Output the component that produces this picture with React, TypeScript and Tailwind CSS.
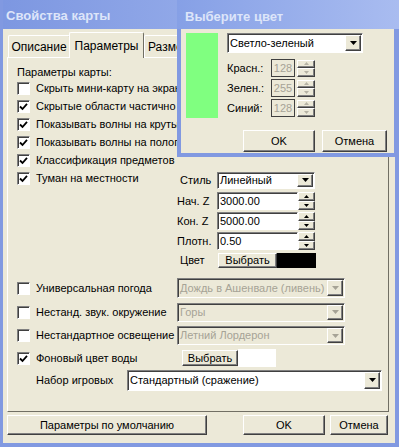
import clsx from "clsx"

const raised = "border border-t-white border-l-white border-r-[#404040] border-b-[#404040] shadow-[inset_-1px_-1px_0_#808080]"
const sunken = "border border-t-[#808080] border-l-[#808080] border-r-white border-b-white shadow-[inset_1px_1px_0_#404040]"

function DownArrow({ disabled }: { disabled?: boolean }) {
    return (
        <svg width="7" height="4" viewBox="0 0 7 4">
            <path d="M0 0h7L3.5 4z" fill={disabled ? "#A6A396" : "#000"} />
        </svg>
    )
}

function Combo({ value, className, disabled }: { value: string; className: string; disabled?: boolean }) {
    return (
        <div className={clsx("flex items-stretch", sunken, disabled ? "bg-[#ECE9D8] text-[#A6A396]" : "bg-white", className)}>
            <span className="flex-1 flex items-center pl-[2px] whitespace-nowrap overflow-hidden">{value}</span>
            <span className={clsx("w-[16px] m-[1px] flex items-center justify-center bg-[#ECE9D8]", raised)}>
                <DownArrow disabled={disabled} />
            </span>
        </div>
    )
}

function Spin({ className, disabled }: { className: string; disabled?: boolean }) {
    const fill = disabled ? "#B5B2A4" : "#000"
    return (
        <div className={clsx("flex flex-col", className)}>
            <span className={clsx("flex-1 flex items-center justify-center bg-[#ECE9D8]", raised)}>
                <svg width="5" height="3" viewBox="0 0 5 3"><path d="M2.5 0L5 3H0z" fill={fill} /></svg>
            </span>
            <span className={clsx("flex-1 flex items-center justify-center bg-[#ECE9D8]", raised)}>
                <svg width="5" height="3" viewBox="0 0 5 3"><path d="M0 0h5L2.5 3z" fill={fill} /></svg>
            </span>
        </div>
    )
}

function Check({ checked, label, className }: { checked?: boolean; label: string; className?: string }) {
    return (
        <div className={clsx("flex items-center gap-[6px] whitespace-nowrap", className)}>
            <span className={clsx("w-[13px] h-[13px] shrink-0 bg-white flex items-center justify-center", sunken)}>
                {checked && (
                    <svg width="9" height="9" viewBox="0 0 9 9">
                        <path d="M1 4.5L3.5 7L8 1.8" fill="none" stroke="#000" strokeWidth="1.8" />
                    </svg>
                )}
            </span>
            <span>{label}</span>
        </div>
    )
}

function Btn({ label, className }: { label: string; className: string }) {
    return (
        <div className={clsx("flex items-center justify-center bg-[#ECE9D8]", raised, className)}>{label}</div>
    )
}

export default function App() {
    const fogRows = [
        { label: "Нач. Z", value: "3000.00" },
        { label: "Кон. Z", value: "5000.00" },
        { label: "Плотн.", value: "0.50" },
    ]

    return (
        <div className="relative w-[399px] h-[447px] overflow-hidden text-[11px] text-black font-['Liberation_Sans',Arial,sans-serif]">
            {/* Main window */}
            <div className="flex flex-col w-full h-full bg-[#8199E1] pl-[3px] pr-[4px] pb-[4px]">
                <div className="h-[29px] shrink-0 flex items-center pt-[3px] pl-[3px] bg-gradient-to-r from-[#7D97E1] to-[#A9BCF0] text-[13px] font-bold text-[#DDE5F9]">
                    Свойства карты
                </div>
                <div className="flex-1 flex flex-col bg-[#ECE9D8] pl-[4px] pt-[3px]">
                    {/* Tabs */}
                    <div className="h-[25px] flex items-end pl-[1px]">
                        <div className="w-[62px] h-[22px] flex items-center justify-center border border-b-0 border-t-white border-l-white border-r-[#716F64] rounded-t-[2px] text-[12px]">
                            Описание
                        </div>
                        <div className="relative z-10 w-[75px] h-[26px] -ml-[1px] -mb-[1px] flex items-center justify-center bg-[#ECE9D8] border border-b-0 border-t-white border-l-white border-r-[#716F64] rounded-t-[2px] text-[12px]">
                            Параметры
                        </div>
                        <div className="w-[36px] h-[22px] flex items-center pl-[3px] border border-r-0 border-b-0 border-t-white border-l-white rounded-tl-[2px] text-[12px] overflow-hidden whitespace-nowrap">
                            Размеры
                        </div>
                    </div>

                    {/* Panel */}
                    <div className="w-[382px] h-[355px] flex flex-col pl-[9px] pt-[7px] border border-t-white border-l-white border-r-[#716F64] border-b-[#716F64]">
                        <div className="h-[14px] flex items-center">Параметры карты:</div>
                        {/* rows running under the colour dialog are cut where it starts */}
                        <Check className="h-[18px] w-[160px] overflow-hidden" label="Скрыть мини-карту на экране предпросмотра" />
                        <Check className="h-[18px] w-[160px] overflow-hidden" checked label="Скрытые области частично видимы" />
                        <Check className="h-[18px] w-[160px] overflow-hidden" checked label="Показывать волны на крутых берегах" />
                        <Check className="h-[18px] w-[160px] overflow-hidden" checked label="Показывать волны на пологих берегах" />
                        <Check className="h-[18px]" checked label="Классификация предметов" />

                        {/* Fog */}
                        <div className="flex">
                            <div className="w-[160px] shrink-0">
                                <Check className="h-[18px]" checked label="Туман на местности" />
                            </div>
                            <div className="flex flex-col">
                                <div className="h-[22px] flex items-center">
                                    <span className="w-[40px] pl-[3px]">Стиль</span>
                                    <Combo className="w-[98px] h-[17px]" value="Линейный" />
                                </div>
                                {fogRows.map(r => (
                                    <div key={r.label} className="h-[20px] flex items-center">
                                        <span className="w-[40px]">{r.label}</span>
                                        <div className={clsx("w-[81px] h-[18px] bg-white flex items-center pl-[2px]", sunken)}>{r.value}</div>
                                        <Spin className="w-[17px] h-[18px]" />
                                    </div>
                                ))}
                                <div className="h-[19px] flex items-center">
                                    <span className="w-[41px] pl-[3px]">Цвет</span>
                                    <Btn className="w-[59px] h-[15px]" label="Выбрать" />
                                    <div className="w-[39px] h-[15px] bg-black" />
                                </div>
                            </div>
                        </div>

                        <div className="h-[6px]" />
                        <div className="h-[24px] flex items-center">
                            <Check className="w-[160px]" label="Универсальная погода" />
                            <Combo disabled className="w-[168px] h-[20px]" value="Дождь в Ашенвале (ливень)" />
                        </div>
                        <div className="h-[24px] flex items-center">
                            <Check className="w-[160px]" label="Нестанд. звук. окружение" />
                            <Combo disabled className="w-[168px] h-[19px]" value="Горы" />
                        </div>
                        <div className="h-[23px] flex items-center">
                            <Check className="w-[160px]" label="Нестандартное освещение" />
                            <Combo disabled className="w-[168px] h-[19px]" value="Летний Лордерон" />
                        </div>
                        <div className="h-[22px] flex items-center">
                            <Check className="w-[165px]" checked label="Фоновый цвет воды" />
                            <Btn className="w-[56px] h-[16px]" label="Выбрать" />
                            <div className="w-[38px] h-[18px] bg-white" />
                        </div>
                        <div className="h-[22px] flex items-center">
                            <span className="w-[110px] pl-[19px]">Набор игровых</span>
                            <Combo className="w-[255px] h-[21px]" value="Стандартный (сражение)" />
                        </div>
                    </div>

                    {/* Bottom buttons */}
                    <div className="mt-[3px] h-[20px] flex">
                        <Btn className="w-[200px]" label="Параметры по умолчанию" />
                        <Btn className="w-[82px] ml-[36px]" label="OK" />
                        <Btn className="w-[58px] ml-[5px]" label="Отмена" />
                    </div>
                </div>
            </div>

            {/* Colour picker dialog on top */}
            <div className="absolute left-[177px] top-0 w-[222px] h-[157px] flex flex-col bg-[#8199E1] pl-[4px] pr-[5px] pb-[4px]">
                <div className="h-[29px] shrink-0 flex items-center pt-[5px] -ml-[4px] -mr-[5px] pl-[8px] bg-gradient-to-r from-[#86A0E6] to-[#A9BCF0] text-[13px] font-bold text-[#DDE5F9]">
                    Выберите цвет
                </div>
                <div className="flex-1 flex flex-col bg-[#ECE9D8] pt-[4px] pl-[5px]">
                    <div className="flex">
                        <div className="w-[32px] h-[85px] bg-[#80FF80]" />
                        <div className="ml-[9px] flex flex-col">
                            <Combo className="w-[136px] h-[20px]" value="Светло-зеленый" />
                            <div className="mt-[6px] flex flex-col gap-[2px]">
                                {[["Красн.:", "128"], ["Зелен.:", "255"], ["Синий:", "128"]].map(([l, v]) => (
                                    <div key={l} className="h-[18px] flex items-center">
                                        <span className="w-[44px]">{l}</span>
                                        <div className="w-[24px] h-[18px] flex items-center justify-center text-[#A6A396] border border-[#404040]">{v}</div>
                                        <Spin disabled className="ml-[2px] w-[18px] h-[17px]" />
                                    </div>
                                ))}
                            </div>
                        </div>
                    </div>
                    <div className="mt-[12px] h-[22px] flex pl-[57px]">
                        <Btn className="w-[72px]" label="OK" />
                        <Btn className="w-[65px] ml-[7px]" label="Отмена" />
                    </div>
                </div>
            </div>
        </div>
    )
}
